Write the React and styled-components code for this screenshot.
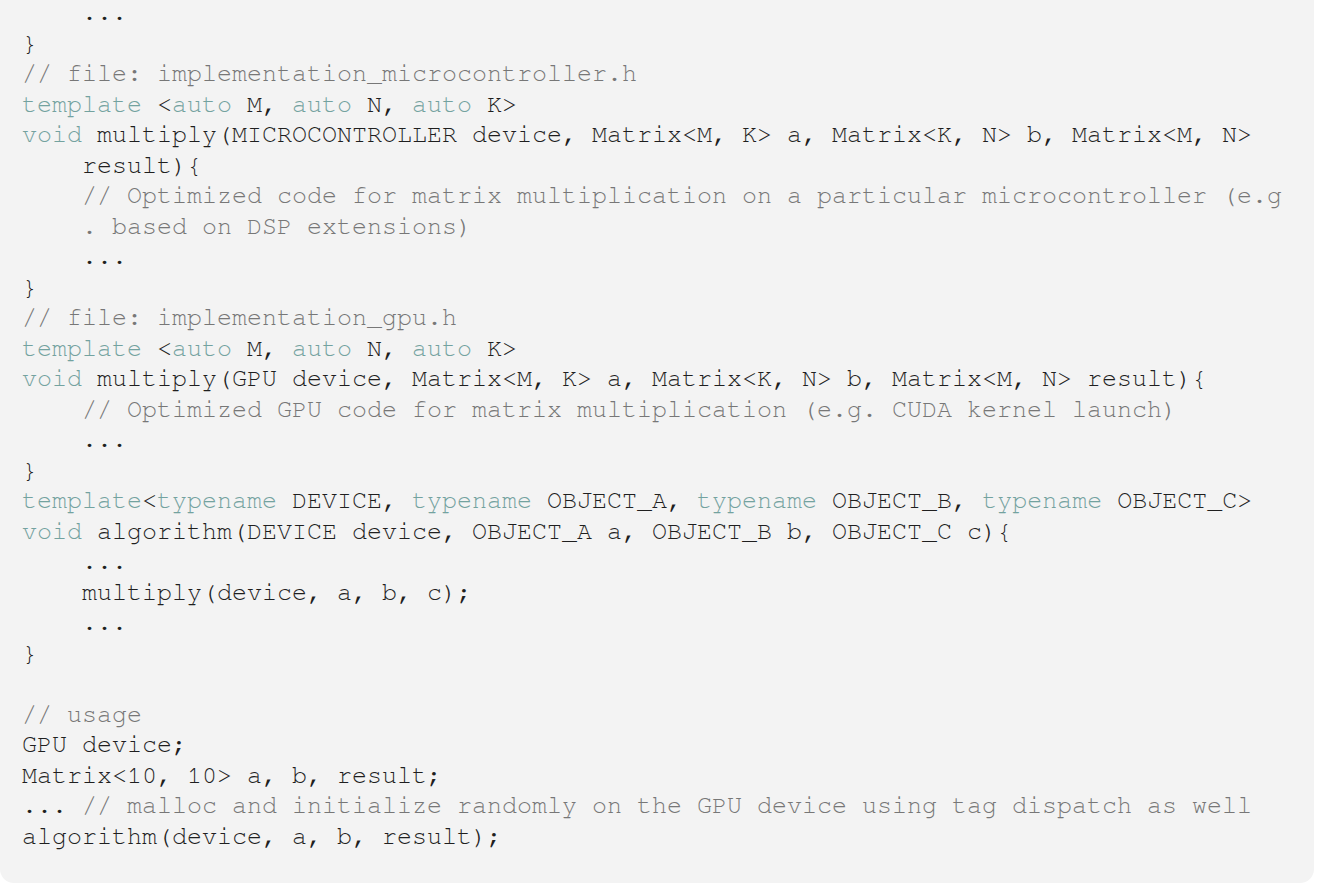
import styled, { createGlobalStyle } from "styled-components";

const GlobalStyle = createGlobalStyle`
  html, body {
    margin: 0;
    padding: 0;
    background: #ffffff;
  }
`;

// each entry is one visual line; a leading "~" marks a wrapped comment line
const source = [
  "    ...",
  "}",
  "// file: implementation_microcontroller.h",
  "template <auto M, auto N, auto K>",
  "void multiply(MICROCONTROLLER device, Matrix<M, K> a, Matrix<K, N> b, Matrix<M, N>",
  "    result){",
  "    // Optimized code for matrix multiplication on a particular microcontroller (e.g",
  "~    . based on DSP extensions)",
  "    ...",
  "}",
  "// file: implementation_gpu.h",
  "template <auto M, auto N, auto K>",
  "void multiply(GPU device, Matrix<M, K> a, Matrix<K, N> b, Matrix<M, N> result){",
  "    // Optimized GPU code for matrix multiplication (e.g. CUDA kernel launch)",
  "    ...",
  "}",
  "template<typename DEVICE, typename OBJECT_A, typename OBJECT_B, typename OBJECT_C>",
  "void algorithm(DEVICE device, OBJECT_A a, OBJECT_B b, OBJECT_C c){",
  "    ...",
  "    multiply(device, a, b, c);",
  "    ...",
  "}",
  "",
  "// usage",
  "GPU device;",
  "Matrix<10, 10> a, b, result;",
  "... // malloc and initialize randomly on the GPU device using tag dispatch as well",
  "algorithm(device, a, b, result);",
];

const KEYWORDS = /\b(template|auto|void|typename)\b/g;

const tokenize = (line) => {
  if (line.startsWith("~")) return [{ kind: "comment", text: line.slice(1) }];
  const at = line.indexOf("//");
  const code = at === -1 ? line : line.slice(0, at);
  const tokens = [];
  let last = 0;
  code.replace(KEYWORDS, (word, _g, offset) => {
    if (offset > last) tokens.push({ kind: "plain", text: code.slice(last, offset) });
    tokens.push({ kind: "keyword", text: word });
    last = offset + word.length;
    return word;
  });
  if (last < code.length) tokens.push({ kind: "plain", text: code.slice(last) });
  if (at !== -1) tokens.push({ kind: "comment", text: line.slice(at) });
  return tokens;
};

const App = () => {
  return (
    <>
      <GlobalStyle />
      <Page>
        <CodeBlock>
          {source.map((line, i) => (
            <Line key={i}>
              {line === ""
                ? " "
                : tokenize(line).map((t, j) => (
                    <Token key={j} $kind={t.kind}>
                      {t.text}
                    </Token>
                  ))}
            </Line>
          ))}
        </CodeBlock>
      </Page>
    </>
  );
};

const Page = styled.div`
  width: 1320px;
  height: 889px;
  padding: 0 6px 6px 0;
  box-sizing: border-box;
  overflow: hidden;
`;

// the top of the block is scrolled just past the window edge
const CodeBlock = styled.pre`
  margin: -2px 0 0;
  height: calc(100% + 2px);
  box-sizing: border-box;
  padding: 0 0 0 22px;
  background: #f3f3f3;
  border-radius: 0 0 14px 14px;
  font-family: "Nimbus Mono PS", "Nimbus Mono L", "FreeMono", Courier,
    "Liberation Mono", monospace;
  font-size: 25px;
  line-height: 30.5px;
  color: #1f1f1f;
`;

const Line = styled.div`
  white-space: pre;
  height: 30.5px;
`;

const colors = {
  plain: "#1f1f1f",
  keyword: "#73a29f",
  comment: "#777777",
};

const Token = styled.span`
  color: ${({ $kind }) => colors[$kind]};
`;

export default App;
